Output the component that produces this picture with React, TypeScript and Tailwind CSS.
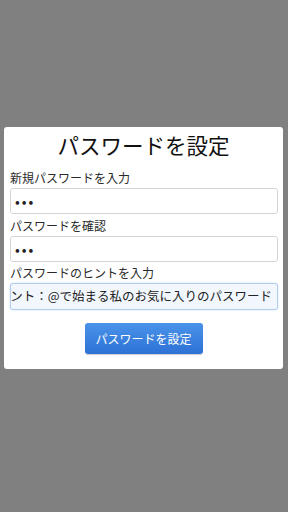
import React from 'react';

const font = { fontFamily: '"Noto Sans CJK JP", "Noto Sans", sans-serif' };

const Label: React.FC<{ children: React.ReactNode; className?: string }> = ({ children, className = '' }) => (
  <div className={`text-[12px] leading-[16px] text-[#2a2a2a] ${className}`}>{children}</div>
);

export default function App() {
  return (
    <div className="h-[512px] w-[288px] bg-[#808080] pt-[127px] pl-[4px]" style={font}>
      <div className="w-[279px] rounded-[3px] bg-white px-[6px] pt-[5px] pb-[15px]">
        <h1 className="text-center text-[21.5px] leading-[26px] text-[#111]">パスワードを設定</h1>

        {/* new password */}
        <Label className="mt-[12px]">新規パスワードを入力</Label>
        <input
          type="password"
          defaultValue="abc"
          className="mt-[2px] block h-[26px] w-[268px] rounded-[3px] border border-[#d4d4d4] bg-white px-[4px] text-[14px] tracking-[2px] text-[#222] outline-none"
        />

        {/* confirm */}
        <Label className="mt-[4px]">パスワードを確認</Label>
        <input
          type="password"
          defaultValue="abc"
          className="mt-[2px] block h-[26px] w-[268px] rounded-[3px] border border-[#d4d4d4] bg-white px-[4px] text-[14px] tracking-[2px] text-[#222] outline-none"
        />

        {/* hint - focused, scrolled to end */}
        <Label className="mt-[3px]">パスワードのヒントを入力</Label>
        <div className="mt-[2px] flex h-[27px] w-[268px] items-center justify-end overflow-hidden whitespace-nowrap rounded-[3px] border border-[#b5cdee] bg-[#f2f7fe] pr-[5px] text-[12.5px] text-[#222] shadow-[0_0_2px_rgba(90,150,230,0.35)]">
          ヒント：@で始まる私のお気に入りのパスワード
        </div>

        <div className="mt-[13px] flex justify-center">
          <button className="h-[31px] w-[118px] rounded-[3px] bg-gradient-to-b from-[#4a93ea] to-[#2d71d5] text-[12px] text-white shadow-[0_1px_1px_rgba(0,0,0,0.2)]">
            パスワードを設定
          </button>
        </div>
      </div>
    </div>
  );
}
